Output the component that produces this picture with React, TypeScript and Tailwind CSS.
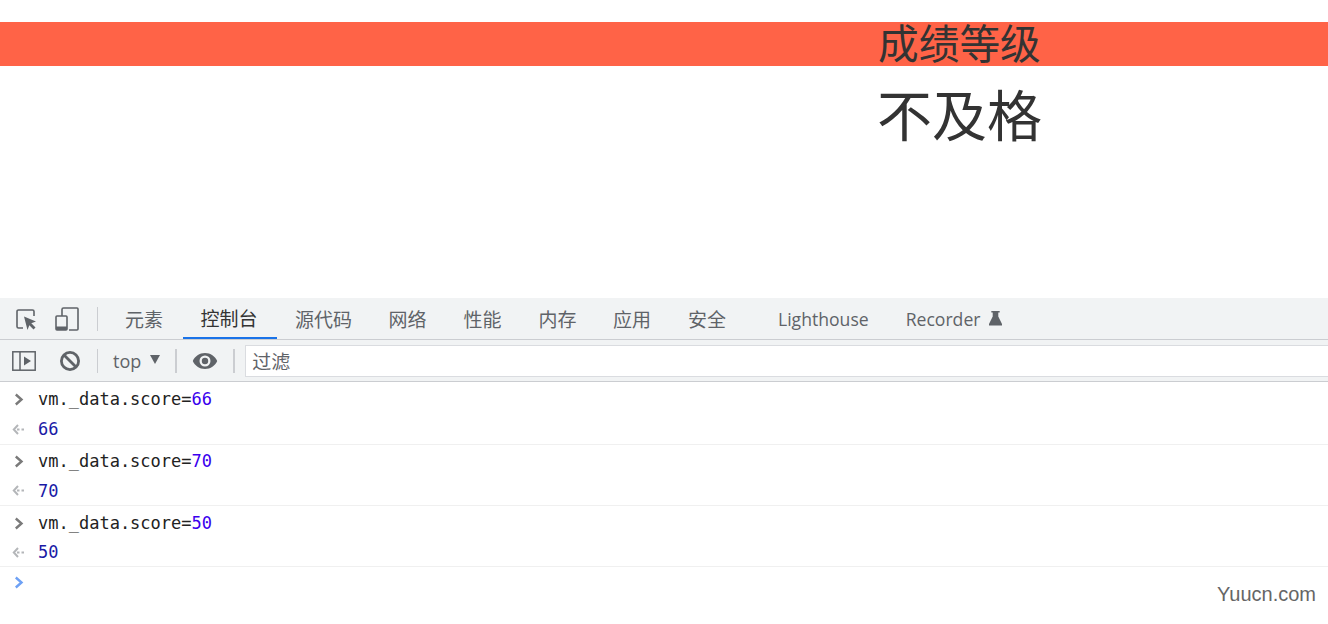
const cjk = "font-['Noto_Sans_CJK_SC','Noto_Sans',sans-serif]";

function InspectIcon() {
  return (
    <svg width="24" height="24" viewBox="0 0 24 24" fill="none">
      <path d="M9 21H4.500A1.500 1.500 0 0 1 3 19.500V4.500A1.500 1.500 0 0 1 4.500 3h14A1.500 1.500 0 0 1 20 4.500V9" stroke="#5f6368" strokeWidth="1.600" />
      <path d="M10 9.500l12 5-4.700 1.800 4.200 4.200-2 2-4.200-4.300-1.800 4.800z" fill="#5f6368" />
    </svg>
  );
}

function DeviceIcon() {
  return (
    <svg width="26" height="26" viewBox="0 0 26 26" fill="none">
      <path d="M8 10V3.500A1.500 1.500 0 0 1 9.500 2H23a1 1 0 0 1 1 1v20a1 1 0 0 1-1 1H15" stroke="#5f6368" strokeWidth="1.600" />
      <rect x="2" y="10" width="11" height="14" rx="1" stroke="#5f6368" strokeWidth="1.600" />
      <rect x="2" y="20.500" width="11" height="3.500" fill="#5f6368" />
    </svg>
  );
}

function SidebarIcon() {
  return (
    <svg width="24" height="20" viewBox="0 0 24 20" fill="none">
      <rect x="0.800" y="0.800" width="22.400" height="18.400" stroke="#5f6368" strokeWidth="1.500" />
      <path d="M8 1v18" stroke="#5f6368" strokeWidth="1.500" />
      <path d="M12 5.500l7 4.500-7 4.500z" fill="#5f6368" />
    </svg>
  );
}

function BlockIcon() {
  return (
    <svg width="22" height="22" viewBox="0 0 22 22" fill="none">
      <circle cx="11" cy="11" r="8.600" stroke="#5f6368" strokeWidth="2.800" />
      <path d="M5 5l12 12" stroke="#5f6368" strokeWidth="2.800" />
    </svg>
  );
}

function EyeIcon() {
  return (
    <svg width="26" height="18" viewBox="0 0 26 18">
      <path fillRule="evenodd" d="M13 1C7.500 1 2.800 4.300 0.800 9c2 4.700 6.700 8 12.200 8s10.200-3.300 12.200-8C23.200 4.300 18.500 1 13 1zm0 13.500A5.500 5.500 0 1 1 13 3.500a5.500 5.500 0 0 1 0 11zM13 5.800a3.200 3.200 0 1 0 0 6.400 3.200 3.200 0 0 0 0-6.400z" fill="#5f6368" />
    </svg>
  );
}

function FlaskIcon() {
  return (
    <svg width="13" height="16" viewBox="0 0 14 16">
      <path d="M2.500 0.500h9v1.500H10v4.500l4 8V16H0v-1.500l4-8V2H2.500z" fill="#5f6368" />
    </svg>
  );
}

function Chevron({ color }: { color: string }) {
  return (
    <svg width="10" height="13" viewBox="0 0 10 13" fill="none">
      <path d="M1.800 1.500L7.500 6.500l-5.700 5" stroke={color} strokeWidth="2.400" />
    </svg>
  );
}

function ResultArrow() {
  return (
    <svg width="13" height="11" viewBox="0 0 13 11" fill="none">
      <path d="M6 1L1.800 5.500 6 10" stroke="#b4b6b9" strokeWidth="2" />
      <path d="M5 5.500h2.500M9.500 5.500H12" stroke="#b4b6b9" strokeWidth="2" />
    </svg>
  );
}

const tabs = [
  { label: "元素", width: "w-[85px] pl-[7px]" },
  { label: "控制台", width: "w-[94px] pr-[2px]", active: true },
  { label: "源代码", width: "w-[93px]" },
  { label: "网络", width: "w-[75px]" },
  { label: "性能", width: "w-[75px]" },
  { label: "内存", width: "w-[75px]" },
  { label: "应用", width: "w-[74px]" },
  { label: "安全", width: "w-[76px]" },
];

const entries = [
  { score: "66", row: "h-[63px] pt-[2px]", result: "h-[30px]" },
  { score: "70", row: "h-[61px] pt-[1px]", result: "h-[29px]" },
  { score: "50", row: "h-[61px] pt-[2px]", result: "h-[28px]" },
];

export default function App() {
  return (
    <div className={`relative h-[624px] w-[1328px] overflow-hidden bg-white ${cjk}`}>
      <div className="h-[298px] pt-[22px] text-[#333333]">
        <div className="h-[44px] bg-[#ff6347] pl-[878px] text-[40.700px] leading-[40px]">成绩等级</div>
        <div className="pl-[877px] pt-[2px] text-[55px] leading-[88px]">不及格</div>
      </div>

      <div className="flex h-[42px] items-center border-b border-[#cbcdd1] bg-[#f1f3f4]">
        <div className="ml-[14px] flex w-[24px] justify-center"><InspectIcon /></div>
        <div className="ml-[16px] flex w-[26px] justify-center"><DeviceIcon /></div>
        <div className="ml-[17px] h-[24px] w-px bg-[#cbcdd1]" />
        <div className="flex h-full">
          {tabs.map((tab) => (
            <div
              key={tab.label}
              className={`flex items-center justify-center pt-[2px] text-[19px] ${tab.width} ${tab.active ? "border-b-[2px] border-[#1a73e8] text-[#333333]" : "text-[#5f6368]"}`}
            >
              {tab.label}
            </div>
          ))}
        </div>
        <div className="ml-[33px] pt-[2px] font-['Open_Sans',sans-serif] text-[17.600px] text-[#5f6368]">Lighthouse</div>
        <div className="ml-[37px] pt-[2px] font-['Open_Sans',sans-serif] text-[17.600px] text-[#5f6368]">Recorder</div>
        <div className="mb-[2px] ml-[9px] flex"><FlaskIcon /></div>
      </div>

      <div className="flex h-[42px] items-center border-b border-[#cbcdd1] bg-[#f1f3f4]">
        <div className="ml-[12px] flex"><SidebarIcon /></div>
        <div className="ml-[23px] flex"><BlockIcon /></div>
        <div className="ml-[16px] h-[24px] w-px bg-[#cbcdd1]" />
        <div className="ml-[15px] pt-[2px] font-['Open_Sans',sans-serif] text-[18px] text-[#5f6368]">top</div>
        <div className="mb-[3px] ml-[9px] h-0 w-0 border-x-[5.500px] border-t-[9px] border-x-transparent border-t-[#5f6368]" />
        <div className="ml-[15px] h-[24px] w-[2px] bg-[#cbcdd1]" />
        <div className="ml-[15px] flex"><EyeIcon /></div>
        <div className="ml-[15px] h-[24px] w-[2px] bg-[#cbcdd1]" />
        <div className="ml-[10px] flex h-[32px] flex-1 items-center border border-r-0 border-[#dadce0] bg-white pl-[6px] pt-[2px] text-[19px] text-[#5f6368]">过滤</div>
      </div>

      <div className="font-['DejaVu_Sans_Mono',monospace] text-[17px] leading-[30px]">
        {entries.map((entry) => (
          <div key={entry.score} className={`border-b border-[#f0f0f0] ${entry.row}`}>
            <div className="flex h-[30px] items-center">
              <div className="ml-[14px] flex w-[24px]"><Chevron color="#7a7a7a" /></div>
              <span className="text-[#222222]">
                vm._data.score=<span className="text-[#3a00ee]">{entry.score}</span>
              </span>
            </div>
            <div className={`flex items-center ${entry.result}`}>
              <div className="ml-[12px] flex w-[26px]"><ResultArrow /></div>
              <span className="text-[#1a1aa6]">{entry.score}</span>
            </div>
          </div>
        ))}
        <div className="ml-[14px] flex h-[31px] items-center"><Chevron color="#6ea1f5" /></div>
      </div>

      <div className="absolute right-[12px] top-[582px] font-['Liberation_Sans',sans-serif] text-[20px] leading-[24px] text-[#666666]">Yuucn.com</div>
    </div>
  );
}
